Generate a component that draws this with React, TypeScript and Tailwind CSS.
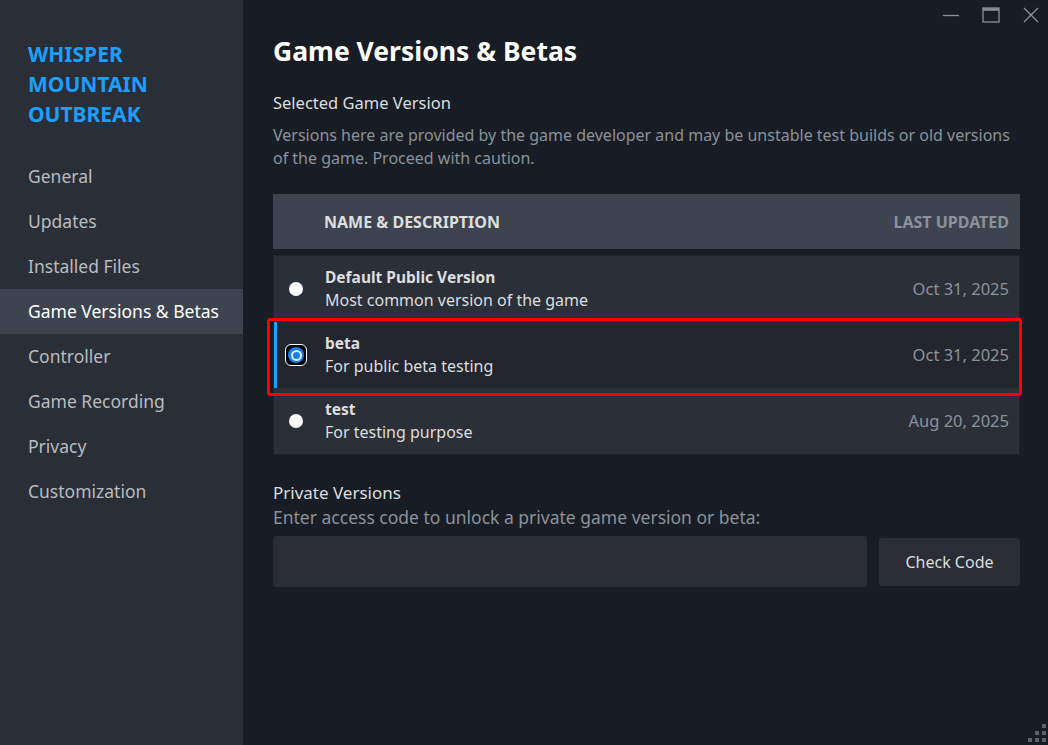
import React from "react"

const navItems = [
  "General",
  "Updates",
  "Installed Files",
  "Game Versions & Betas",
  "Controller",
  "Game Recording",
  "Privacy",
  "Customization",
]

interface Branch {
  name: string
  description: string
  updated: string
}

const branches: Branch[] = [
  { name: "Default Public Version", description: "Most common version of the game", updated: "Oct 31, 2025" },
  { name: "beta", description: "For public beta testing", updated: "Oct 31, 2025" },
  { name: "test", description: "For testing purpose", updated: "Aug 20, 2025" },
]

function WindowControls() {
  return (
    <div className="absolute top-0 right-0 flex items-center h-[30px] pr-[8px] gap-[22px] text-[#8b929a]">
      <svg width="18" height="18" viewBox="0 0 18 18">
        <path d="M1 9.5h16" stroke="currentColor" strokeWidth="1.3" />
      </svg>
      <svg width="18" height="18" viewBox="0 0 18 18">
        <rect x="1" y="2" width="16" height="14" fill="none" stroke="currentColor" strokeWidth="1.3" />
        <path d="M1 3.5h16" stroke="currentColor" strokeWidth="2.5" />
      </svg>
      <svg width="18" height="18" viewBox="0 0 18 18">
        <path d="M2 2l14 14M16 2L2 16" stroke="currentColor" strokeWidth="1.3" />
      </svg>
    </div>
  )
}

function ResizeGrip() {
  return (
    <svg className="absolute right-0 bottom-0" width="24" height="24" viewBox="0 0 24 24">
      <g fill="#5d626b">
        <rect x="18" y="3" width="4" height="4" />
        <rect x="11" y="10" width="4" height="4" />
        <rect x="18" y="10" width="4" height="4" />
        <rect x="4" y="17" width="4" height="4" />
        <rect x="11" y="17" width="4" height="4" />
        <rect x="18" y="17" width="4" height="4" />
      </g>
    </svg>
  )
}

function Radio({ checked }: { checked: boolean }) {
  if (checked) {
    return (
      <div className="w-[22px] h-[22px] shrink-0 rounded-[6px] border-[1.5px] border-white bg-black flex items-center justify-center">
        <div className="w-[16px] h-[16px] rounded-full bg-[#1a7fe8] flex items-center justify-center">
          <div className="w-[11px] h-[11px] rounded-full border-[2px] border-[#d8ecff] bg-[#1a7fe8]" />
        </div>
      </div>
    )
  }
  return <div className="w-[14px] h-[14px] shrink-0 rounded-full bg-white" />
}

export default function App() {
  return (
    <div
      className="w-full h-[745px] flex bg-[#181c24] overflow-hidden"
      style={{ fontFamily: '"Noto Sans", "Open Sans", sans-serif' }}
    >
      {/* Sidebar */}
      <div className="w-[243px] shrink-0 bg-[#2a2e37] flex flex-col">
        <div className="pl-[28px] pt-[39px] text-[21px] leading-[30px] font-bold text-[#1a9fff]">
          <div>WHISPER</div>
          <div>MOUNTAIN</div>
          <div>OUTBREAK</div>
        </div>
        <div className="mt-[25px] flex flex-col">
          {navItems.map((item) => {
            const active = item === "Game Versions & Betas"
            return (
              <div
                key={item}
                className={
                  "h-[45px] flex items-center pl-[28px] text-[17.5px] " +
                  (active ? "bg-[#3d4450] text-white" : "text-[#b8bcbf]")
                }
              >
                {item}
              </div>
            )
          })}
        </div>
      </div>

      {/* Main */}
      <div className="relative flex-1 px-[28px] pt-[33px]">
        <WindowControls />
        <h1 className="text-[26.5px] leading-[36px] font-bold text-white pl-[2px]">Game Versions &amp; Betas</h1>

        <div className="pl-[2px] mt-[22px] text-[16.5px] leading-[24px] text-[#dcdedf]">Selected Game Version</div>
        <p className="pl-[2px] mt-[9px] text-[16px] leading-[23px] text-[#8b929a] pr-[2px]">
          Versions here are provided by the game developer and may be unstable test builds or old versions of the game. Proceed with caution.
        </p>

        {/* Table header */}
        <div className="ml-[2px] mt-[24px] h-[55px] bg-[#3d4450] flex items-center pl-[51px] pr-[11px] text-[16px] font-bold">
          <div className="flex-1 text-[#dcdedf]">NAME &amp; DESCRIPTION</div>
          <div className="text-[#8b929a]">LAST UPDATED</div>
        </div>

        {/* Rows */}
        <div className="ml-[2px] mt-[6px] border border-[#1f2229] bg-[#2b2f38] flex flex-col">
          {branches.map((b) => {
            const selected = b.name === "beta"
            return (
              <div
                key={b.name}
                className={
                  "relative h-[66px] flex items-center " +
                  (selected ? "bg-[#23262e] border-l-[3px] border-[#1a9fff] pl-[12px]" : "pl-[15px]")
                }
              >
                <div className="w-[14px] flex items-center justify-center">
                  <Radio checked={selected} />
                </div>
                <div className="ml-[22px] flex-1 flex flex-col">
                  <div className="text-[15.5px] leading-[23px] font-bold text-[#dcdedf]">{b.name}</div>
                  <div className="text-[16px] leading-[23px] text-[#dcdedf]">{b.description}</div>
                </div>
                <div className="pr-[10px] text-[16.5px] text-[#8b929a]">{b.updated}</div>
                {selected && (
                  <div className="pointer-events-none absolute left-[-10px] right-[-3px] top-[-4px] bottom-[-8px] border-[3px] border-[#ff0000] rounded-[3px]" />
                )}
              </div>
            )
          })}
        </div>

        {/* Private versions */}
        <div className="pl-[2px] mt-[26px] text-[17px] leading-[24px] text-[#dcdedf]">Private Versions</div>
        <div className="pl-[2px] mt-[1px] text-[17.5px] leading-[23px] text-[#8b929a]">
          Enter access code to unlock a private game version or beta:
        </div>
        <div className="ml-[2px] mt-[7px] flex items-center gap-[12px]">
          <input className="flex-1 h-[51px] rounded-[3px] bg-[#2a2d36] outline-none px-3 text-[#dcdedf]" />
          <button className="w-[141px] h-[48px] rounded-[3px] bg-[#2a2d36] text-[16px] text-[#dcdedf]">Check Code</button>
        </div>

        <ResizeGrip />
      </div>
    </div>
  )
}
